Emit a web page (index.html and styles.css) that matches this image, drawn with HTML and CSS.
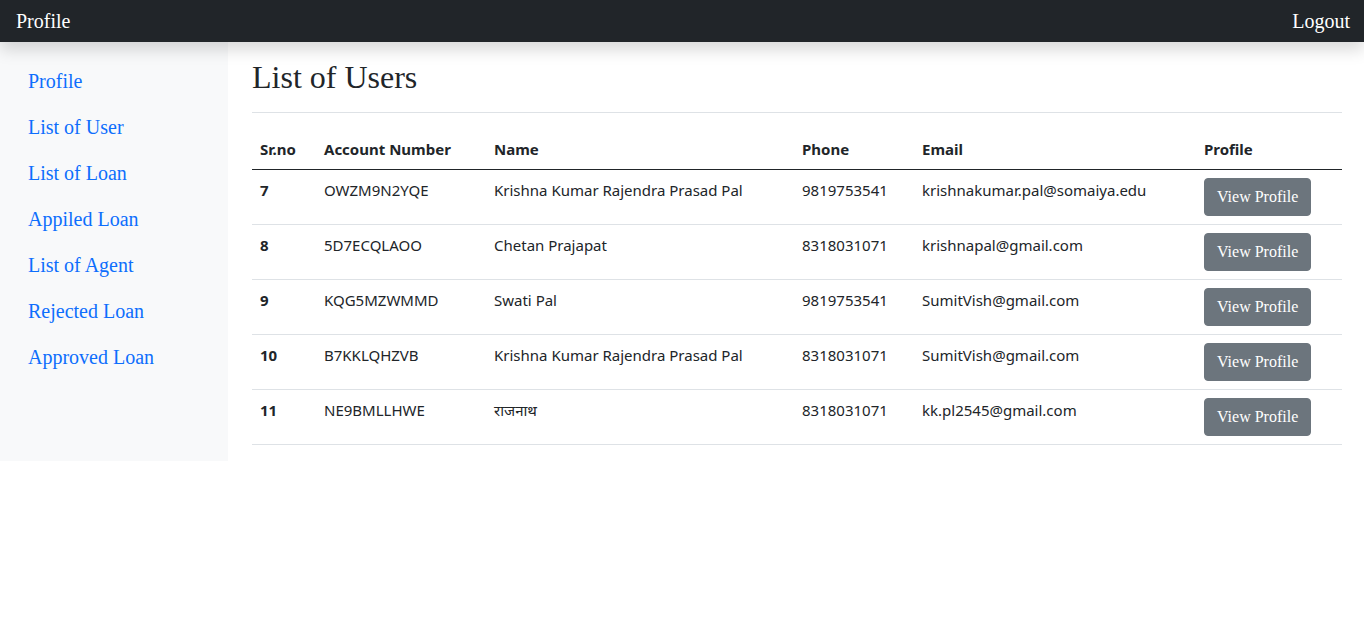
FILE: index.html
```html
<!DOCTYPE html>
<html>
<head>
<meta charset="utf-8">
<title>Profile</title>
<link rel="stylesheet" href="styles.css">
</head>
<body>
<header class="navbar">
  <a class="brand" href="#">Profile</a>
  <a class="logout" href="#">Logout</a>
</header>
<div class="layout">
  <aside class="sidebar">
    <a class="side-link" href="#">Profile</a>
    <a class="side-link" href="#">List of User</a>
    <a class="side-link" href="#">List of Loan</a>
    <a class="side-link" href="#">Appiled Loan</a>
    <a class="side-link" href="#">List of Agent</a>
    <a class="side-link" href="#">Rejected Loan</a>
    <a class="side-link" href="#">Approved Loan</a>
  </aside>
  <main class="main">
    <h2 class="title">List of Users</h2>
    <hr class="rule">
    <table class="users">
      <colgroup>
        <col class="c-sr"><col class="c-acc"><col class="c-name"><col class="c-phone"><col class="c-email"><col class="c-prof">
      </colgroup>
      <thead>
        <tr><th>Sr.no</th><th>Account Number</th><th>Name</th><th>Phone</th><th>Email</th><th>Profile</th></tr>
      </thead>
      <tbody>
        <tr><th>7</th><td>OWZM9N2YQE</td><td>Krishna Kumar Rajendra Prasad Pal</td><td>9819753541</td><td>krishnakumar.pal@somaiya.edu</td><td><button class="btn">View Profile</button></td></tr>
        <tr><th>8</th><td>5D7ECQLAOO</td><td>Chetan Prajapat</td><td>8318031071</td><td>krishnapal@gmail.com</td><td><button class="btn">View Profile</button></td></tr>
        <tr><th>9</th><td>KQG5MZWMMD</td><td>Swati Pal</td><td>9819753541</td><td>SumitVish@gmail.com</td><td><button class="btn">View Profile</button></td></tr>
        <tr><th>10</th><td>B7KKLQHZVB</td><td>Krishna Kumar Rajendra Prasad Pal</td><td>8318031071</td><td>SumitVish@gmail.com</td><td><button class="btn">View Profile</button></td></tr>
        <tr><th>11</th><td>NE9BMLLHWE</td><td>राजनाथ</td><td>8318031071</td><td>kk.pl2545@gmail.com</td><td><button class="btn">View Profile</button></td></tr>
      </tbody>
    </table>
  </main>
</div>
</body>
</html>
```
FILE: styles.css
```css
* { box-sizing: border-box; }
html, body { margin: 0; padding: 0; background: #fff; }
body {
  font-family: "Liberation Serif", "Times New Roman", serif;
  color: #212529;
}
a { text-decoration: none; }

.navbar {
  height: 42px;
  background: #212529;
  display: flex;
  align-items: center;
  justify-content: space-between;
  padding: 0 14px 0 16px;
  box-shadow: 0 8px 16px rgba(0,0,0,0.15);
  position: relative;
  z-index: 2;
}
.brand, .logout {
  color: #fff;
  font-size: 20px;
  line-height: 30px;
}

.layout {
  display: flex;
  align-items: flex-start;
}
.sidebar {
  width: 228px;
  flex: 0 0 228px;
  height: 419px;
  background: #f8f9fa;
  padding: 16px 12px;
  display: flex;
  flex-direction: column;
}
.side-link {
  color: #0d6efd;
  font-size: 20px;
  line-height: 30px;
  padding: 8px 16px;
}

.main {
  flex: 1;
  padding: 16px 22px 0 24px;
}
.title {
  margin: 0;
  font-weight: 400;
  font-size: 32px;
  line-height: 38px;
}
.rule {
  margin: 16px 0;
  border: 0;
  border-top: 1px solid #dee2e6;
}

.users {
  width: 100%;
  border-collapse: collapse;
  table-layout: fixed;
  font-family: "Noto Sans", "Open Sans", sans-serif;
  font-size: 15px;
  color: #212529;
}
.c-sr { width: 64px; }
.c-acc { width: 170px; }
.c-name { width: 308px; }
.c-phone { width: 120px; }
.c-email { width: 282px; }
.c-prof { width: 146px; }

.users th, .users td {
  text-align: left;
  vertical-align: top;
  padding: 8px;
  line-height: 24px;
  border-bottom: 1px solid #dee2e6;
}
.users th { font-weight: 700; }
.users thead th { border-bottom: 1px solid #212529; }

.btn {
  font-family: "Liberation Serif", "Times New Roman", serif;
  font-size: 16px;
  line-height: 24px;
  color: #fff;
  background: #6c757d;
  border: 1px solid #6c757d;
  border-radius: 4px;
  padding: 6px 12px;
  cursor: pointer;
  display: block;
}
```
